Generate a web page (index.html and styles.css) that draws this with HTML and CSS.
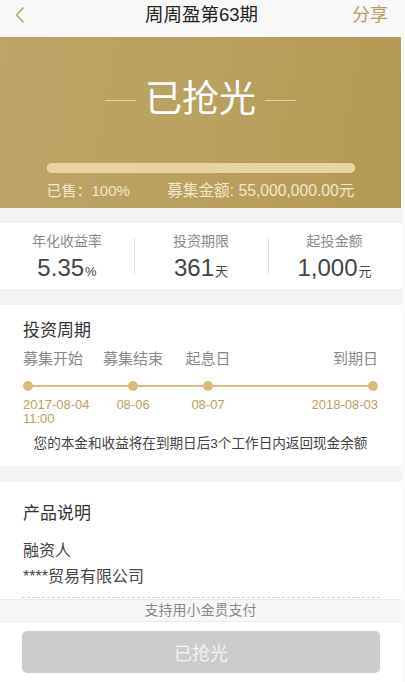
FILE: index.html
```html
<!DOCTYPE html>
<html lang="zh">
<head>
<meta charset="utf-8">
<title>周周盈第63期</title>
<link rel="stylesheet" href="styles.css">
</head>
<body>
<div class="page">
  <header class="nav">
    <svg class="back" width="10" height="18" viewBox="0 0 10 18"><path d="M8.5 1.5 L1.5 9 L8.5 16.5" fill="none" stroke="#b49c63" stroke-width="1.3"/></svg>
    <div class="nav-title">周周盈第63期</div>
    <div class="share">分享</div>
  </header>

  <section class="banner">
    <div class="status">
      <span class="rule"></span>
      <span class="status-text">已抢光</span>
      <span class="rule"></span>
    </div>
    <div class="progress"><div class="progress-fill"></div></div>
    <div class="banner-info">
      <span>已售：100%</span>
      <span class="raised">募集金额: 55,000,000.00元</span>
    </div>
  </section>

  <section class="stats">
    <div class="stat">
      <div class="stat-label">年化收益率</div>
      <div class="stat-value">5.35<span class="unit">%</span></div>
    </div>
    <div class="stat">
      <div class="stat-label">投资期限</div>
      <div class="stat-value">361<span class="unit">天</span></div>
    </div>
    <div class="stat">
      <div class="stat-label">起投金额</div>
      <div class="stat-value">1,000<span class="unit">元</span></div>
    </div>
  </section>

  <section class="card period">
    <h2 class="card-title">投资周期</h2>
    <div class="timeline">
      <div class="track"></div>
      <div class="stop first">
        <div class="stop-label">募集开始</div>
        <div class="dot"></div>
        <div class="stop-date">2017-08-04<br>11:00</div>
      </div>
      <div class="stop s2">
        <div class="stop-label">募集结束</div>
        <div class="dot"></div>
        <div class="stop-date">08-06</div>
      </div>
      <div class="stop s3">
        <div class="stop-label">起息日</div>
        <div class="dot"></div>
        <div class="stop-date">08-07</div>
      </div>
      <div class="stop last">
        <div class="stop-label">到期日</div>
        <div class="dot"></div>
        <div class="stop-date">2018-08-03</div>
      </div>
    </div>
    <p class="note">您的本金和收益将在到期日后3个工作日内返回现金余额</p>
  </section>

  <section class="card desc">
    <h2 class="card-title">产品说明</h2>
    <div class="desc-label">融资人</div>
    <div class="desc-value">****贸易有限公司</div>
    <div class="dotted"></div>
  </section>

  <footer class="footer">
    <div class="pay-tip">支持用小金贯支付</div>
    <div class="btn-wrap"><button class="buy-btn" disabled>已抢光</button></div>
  </footer>
</div>
</body>
</html>
```

FILE: styles.css
```css
* { box-sizing: border-box; margin: 0; padding: 0; }
html, body { background: #fafafa; }
body {
  margin: 0;
  font-family: "Liberation Sans", "Noto Sans CJK SC", sans-serif;
  color: #333;
}
.page {
  width: 401px;
  height: 682px;
  background: #f3f3f3;
  overflow: hidden;
  display: flex;
  flex-direction: column;
}
.nav {
  height: 37px;
  background: #f8f8f8;
  display: grid;
  grid-template-columns: 1fr auto 1fr;
  align-items: start;
  padding: 4px 13px 0 15px;
}
.back { margin-top: 2px; }
.nav-title {
  text-align: center;
  font-size: 18.5px;
  line-height: 22px;
  color: #222;
}
.share {
  justify-self: end;
  font-size: 18px;
  line-height: 22px;
  color: #b49c63;
}
.banner {
  height: 171px;
  background: linear-gradient(100deg, #bca565 0%, #b9a15e 50%, #b39a52 100%);
  padding-top: 44px;
  display: flex;
  flex-direction: column;
  align-items: center;
}
.status {
  display: flex;
  align-items: center;
  gap: 9px;
  height: 38px;
}
.rule {
  width: 31px;
  height: 1px;
  background: #e3d4a3;
}
.status-text {
  font-size: 37px;
  line-height: 38px;
  color: #fff;
}
.progress {
  margin-top: 44px;
  width: 308px;
  height: 10px;
  border-radius: 5px;
  background: #e6d59f;
}
.progress-fill { width: 100%; height: 100%; border-radius: 5px; background: #e6d59f; }
.banner-info {
  width: 308px;
  margin-top: 9px;
  display: flex;
  justify-content: space-between;
  font-size: 15px;
  line-height: 18px;
  color: #f1e7c9;
}
.raised { font-size: 15.7px; }
.stats {
  margin-top: 15px;
  height: 66px;
  background: #fff;
  display: grid;
  grid-template-columns: 134px 134px 133px;
  padding-top: 9px;
}
.stat {
  text-align: center;
  position: relative;
}
.stat + .stat::before {
  content: "";
  position: absolute;
  left: 0;
  top: 6px;
  height: 37px;
  width: 1px;
  background: #e2e2e2;
}
.stat-label {
  font-size: 14px;
  line-height: 18px;
  color: #8a8a8a;
}
.stat-value {
  margin-top: 4px;
  font-size: 24px;
  line-height: 27px;
  color: #444;
}
.unit {
  font-size: 13px;
  margin-left: 1px;
}
.card {
  background: #fff;
  padding: 0 23px;
}
.period {
  margin-top: 16px;
  height: 161px;
  padding-top: 16px;
}
.card-title {
  font-size: 17px;
  line-height: 20px;
  font-weight: normal;
  color: #333;
}
.timeline {
  position: relative;
  display: flex;
  margin-top: 8px;
}
.track {
  position: absolute;
  left: 5px;
  right: 5px;
  top: 36px;
  height: 2px;
  background: #d6bd78;
}
.stop {
  display: flex;
  flex-direction: column;
  align-items: center;
  position: relative;
}
.stop.first { width: 80px; align-items: flex-start; }
.stop.s2 { width: 60px; }
.stop.s3 { width: 44px; margin-left: 23px; }
.stop.last { margin-left: auto; align-items: flex-end; }
.stop-label {
  font-size: 15px;
  line-height: 20px;
  color: #888;
  white-space: nowrap;
}
.dot {
  width: 10px;
  height: 10px;
  border-radius: 50%;
  background: #d6bd78;
  margin-top: 12px;
  position: relative;
}
.stop-date {
  margin-top: 7px;
  font-size: 13px;
  line-height: 14px;
  color: #b9a064;
  white-space: nowrap;
}
.note {
  margin-top: 8px;
  font-size: 13.6px;
  line-height: 20px;
  color: #444;
  text-align: center;
  white-space: nowrap;
}
.desc {
  margin-top: 16px;
  padding-top: 22px;
  height: 117px;
}
.desc-label {
  margin-top: 17px;
  font-size: 16px;
  line-height: 20px;
  color: #444;
}
.desc-value {
  margin-top: 6px;
  font-size: 16px;
  line-height: 20px;
  color: #444;
}
.dotted {
  margin-top: 10px;
  margin-left: -1px;
  margin-right: -2px;
  border-top: 1px dashed #d4d4d4;
}
.footer {
  background: #fff;
  flex: 1;
}
.pay-tip {
  height: 23px;
  border-top: 1px solid #ececec;
  border-bottom: 1px solid #ececec;
  background: #f7f7f7;
  text-align: center;
  font-size: 14px;
  line-height: 21px;
  color: #888;
}
.btn-wrap {
  padding: 9px 21px 0 22px;
}
.buy-btn {
  display: block;
  width: 100%;
  height: 42px;
  border: none;
  border-radius: 5px;
  background: #cccccc;
  color: #f3f3f3;
  font-family: "Liberation Sans", "Noto Sans CJK SC", sans-serif;
  font-size: 18px;
}
```
